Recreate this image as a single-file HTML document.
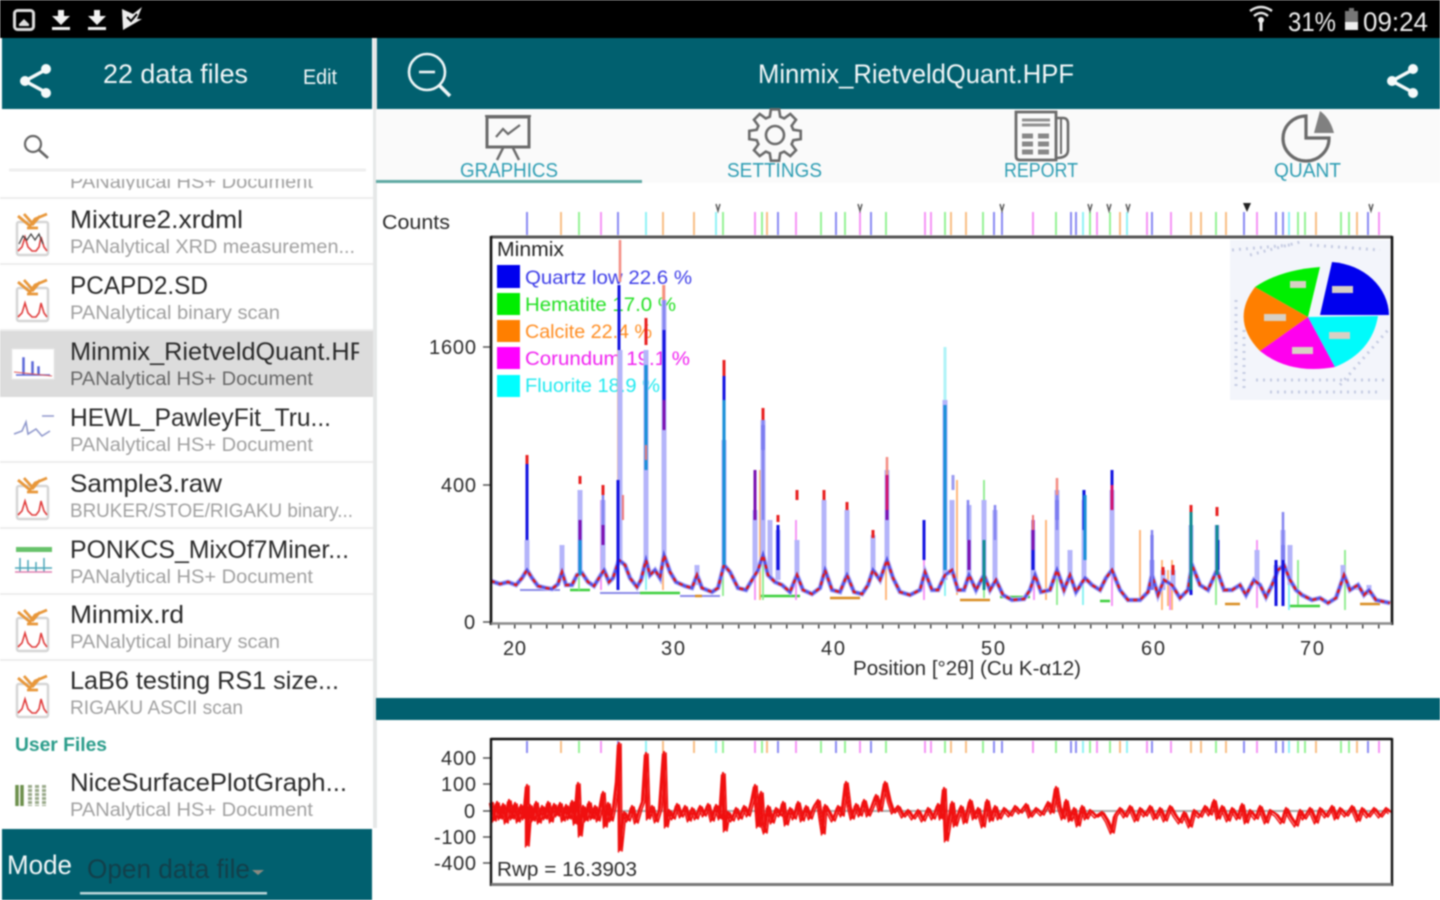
<!DOCTYPE html>
<html><head><meta charset="utf-8"><style>
html,body{margin:0;padding:0;width:1440px;height:900px;overflow:hidden;background:#fff}
svg{display:block;filter:blur(.75px)}
text{font-family:"Liberation Sans",sans-serif}
.t{font-size:25px;fill:#2a2a2a}
.s{font-size:19px;fill:#a0a0a0}
.w{fill:#f2f7f8}
.a{font-size:20px;fill:#2a2a2a}
.tab{font-size:20px;fill:#2d9db3}
.sep{stroke:#eeeeee;stroke-width:2}
</style></head><body>
<svg width="1440" height="900" viewBox="0 0 1440 900" xmlns="http://www.w3.org/2000/svg">
<defs>
<g id="fi">
<rect x="17" y="222" width="31" height="33" rx="2" fill="#fff" stroke="#d5d5d5" stroke-width="2.5"/>
<path d="M18 216 L30 226 L35 219 L47 214 M24 214 L33 224 L40 216 M27 228 H38" fill="none" stroke="#e8973a" stroke-width="2.8"/>
<path d="M18 251 L22 247 L25 237 L28 247 L32 251 L36 251 L39 247 L41 237 L44 247 L47 251" fill="none" stroke="#e03b3b" stroke-width="1.6"/>
</g>
<g id="sh" fill="none" stroke="#f5fafa"><path d="M27 -12 L5 0 L27 12" stroke-width="3.5"/><circle cx="5" cy="0" r="5" fill="#f5fafa" stroke="none"/><circle cx="26" cy="-12" r="5" fill="#f5fafa" stroke="none"/><circle cx="26" cy="12" r="5" fill="#f5fafa" stroke="none"/></g>
<g id="dl" fill="#f2f2f2"><path d="M6 0 H12 V6 H18 L9 15 L0 6 H6 Z"/><rect x="0" y="17" width="18" height="3"/></g>
<clipPath id="c1"><rect x="0" y="110" width="359" height="790"/></clipPath>
<clipPath id="c2"><rect x="0" y="179" width="373" height="11"/></clipPath>
<path id="hump" d="M491 581L500 584L508 582L516 585L522 578L527 570L532 578L538 586L546 588L552 589L558 584L562 572L566 585L572 585L577 575L582 573L588 582L594 586L599 578L604 570L609 582L613 578L619 560L625 565L630 578L637 587L641 580L646 560L650 575L655 570L660 578L664 555L670 572L676 582L685 586L692 588L697 575L702 588L712 592L718 588L724 565L730 572L738 588L746 590L752 580L758 570L763 555L768 575L775 582L782 585L790 592L797 575L803 590L812 594L820 588L825 570L832 590L840 592L847 575L854 592L862 594L868 585L873 570L880 580L887 560L893 578L900 592L910 595L920 590L925 572L932 590L938 590L945 575L952 570L958 590L964 590L969 575L976 590L984 575L990 590L996 580L1003 595L1012 600L1024 599L1030 590L1035 575L1041 592L1050 590L1057 570L1064 590L1070 575L1076 592L1085 578L1092 585L1100 590L1106 578L1112 570L1120 590L1128 600L1140 600L1148 592L1152 575L1158 595L1164 580L1172 585L1180 598L1188 590L1192 565L1200 585L1208 590L1217 570L1224 590L1232 590L1240 585L1246 595L1254 580L1260 585L1266 597L1272 585L1278 570L1284 565L1290 580L1296 590L1302 595L1312 600L1320 598L1328 603L1336 598L1344 575L1350 590L1358 585L1364 595L1369 590L1376 600L1390 603"/>
<path id="res" d="M491 801L494 820L497 802L500 818L503 804L506 822L509 800L512 818L515 803L518 821L521 805L524 818L527 785L527 845L530 805L533 820L536 802L539 822L542 806L545 818L548 802L551 821L554 804L557 815L560 803L563 820L566 805L569 818L572 801L575 823L578 783L580 835L583 806L586 820L589 802L592 818L595 806L598 820L601 803L603 792L605 826L608 803L611 820L614 806L617 780L619 743L620 850L624 812L628 820L632 806L636 822L640 808L643 800L646 753L648 818L652 806L656 821L660 808L664 752L666 826L669 810L673 818L677 804L681 816L685 806L689 820L692 808L696 818L700 806L704 815L708 804L712 820L716 805L720 818L723 773L725 830L728 812L732 820L736 808L740 818L744 806L748 815L752 800L755 785L758 826L761 792L763 825L765 832L768 806L772 822L776 808L780 815L783 802L786 824L790 808L794 818L798 802L802 820L806 806L810 818L814 806L818 800L821 820L823 833L825 805L829 812L833 820L838 806L842 815L846 782L849 806L852 818L856 804L860 815L864 800L868 815L872 806L876 795L880 810L885 782L889 800L893 812L898 806L903 816L908 810L913 818L918 810L923 820L928 808L933 818L938 804L941 818L944 788L946 840L949 822L952 802L955 825L958 815L961 806L965 822L970 800L974 818L978 808L983 826L987 800L991 820L995 806L999 818L1004 808L1010 815L1015 806L1020 812L1026 804L1030 816L1036 808L1042 814L1048 802L1052 812L1056 787L1059 806L1063 818L1066 800L1070 820L1074 808L1078 825L1082 806L1086 818L1090 810L1096 816L1102 812L1107 820L1112 832L1115 815L1120 808L1125 816L1130 806L1136 820L1140 808L1145 815L1150 806L1155 818L1160 808L1165 820L1170 806L1175 815L1180 822L1184 812L1190 826L1194 810L1200 816L1205 806L1210 814L1214 800L1218 818L1222 806L1228 820L1232 808L1238 818L1242 804L1246 822L1250 810L1256 818L1260 806L1266 822L1270 810L1276 814L1282 822L1286 808L1290 816L1296 825L1300 810L1304 818L1310 808L1316 822L1320 808L1326 816L1332 806L1336 818L1340 808L1346 815L1352 806L1358 820L1362 808L1368 816L1374 808L1380 816L1386 808L1390 812"/>
</defs>

<rect width="1440" height="900" fill="#fff"/>
<rect width="1440" height="38" fill="#000"/>
<rect x="373" y="38" width="4" height="790" fill="#e6e8e8"/>
<rect x="2" y="38" width="370" height="71" fill="#01606f"/>
<rect x="377" y="38" width="1063" height="71" fill="#01606f"/>
<rect x="376" y="110" width="1064" height="73" fill="#fafafa"/>

<!-- status bar -->
<rect x="14.5" y="10.5" width="19" height="19" rx="3" fill="none" stroke="#ddd" stroke-width="3"/>
<path d="M19 24 L24 19 L29 24 V26 H19 Z" fill="#ddd"/>
<use href="#dl" x="52" y="10"/><use href="#dl" x="88" y="10"/>
<path d="M122 9 L133 14 L142 7 L137 19 L142 19 L123 30 Z" fill="#eee"/>
<path d="M127 17 L131 21 L137 14" fill="none" stroke="#000" stroke-width="2"/>
<path d="M1250 11 Q1261 3 1272 11 M1254 16 Q1261 10 1268 16" fill="none" stroke="#e8e8e8" stroke-width="2.5"/>
<circle cx="1261" cy="20" r="3" fill="#eee"/><path d="M1261 20 V31" stroke="#eee" stroke-width="3"/>
<text x="1288" y="31" font-size="27" fill="#eee" textLength="48" lengthAdjust="spacingAndGlyphs">31%</text>
<rect x="1345" y="11" width="13" height="19" fill="#777"/><rect x="1345" y="22" width="13" height="8" fill="#eee"/><rect x="1349" y="8" width="5" height="3" fill="#777"/>
<text x="1363" y="31" font-size="27" fill="#eee" textLength="65" lengthAdjust="spacingAndGlyphs">09:24</text>

<!-- left header -->
<use href="#sh" x="20" y="81"/>
<text x="103" y="83" font-size="27" class="w" textLength="145" lengthAdjust="spacingAndGlyphs">22 data files</text>
<text x="303" y="84" font-size="21" class="w" textLength="34" lengthAdjust="spacingAndGlyphs">Edit</text>

<!-- search -->
<circle cx="33" cy="144" r="8" fill="none" stroke="#666" stroke-width="2.2"/>
<path d="M39 150 L48 158" stroke="#666" stroke-width="2.6"/>
<path d="M9 170 H366" stroke="#eeeeee" stroke-width="3"/>

<!-- list -->
<rect x="0" y="331" width="373" height="66" fill="#dcdcdc"/>
<g clip-path="url(#c2)"><text x="70" y="188" class="s" textLength="243" lengthAdjust="spacingAndGlyphs">PANalytical HS+ Document</text></g>
<path class="sep" d="M0 198 H373 M0 264 H373 M0 330 H373 M0 462 H373 M0 528 H373 M0 594 H373 M0 660 H373"/>

<use href="#fi"/>
<use href="#fi" y="66"/>
<use href="#fi" y="264"/><use href="#fi" y="396"/><use href="#fi" y="462"/>
<path d="M19 244 L23 236 L27 240 L31 234 L35 240 L39 234 L43 244" fill="none" stroke="#444" stroke-width="1.3"/>
<!-- hs icons -->
<rect x="12" y="349" width="42" height="30" fill="#fff" stroke="#ebebeb"/>
<path d="M16 375 H23 V358 H24 V375 H32 V362 H33 V375 H38 V367 H39 V375 H50" fill="none" stroke="#5a66d8" stroke-width="1.5"/>
<path d="M14 372 L52 376" stroke="#d55" stroke-width="1"/>
<path d="M14 434 L22 431 L26 422 L28 434 L36 429 L42 436 L50 431 M42 416 H54" fill="none" stroke="#8f98cc" stroke-width="1.6"/>
<rect x="16" y="547" width="36" height="5" fill="#67c26a"/>
<path d="M15 568 H52 M20 558 V572 M28 560 V572 M36 562 V572 M44 558 V572" fill="none" stroke="#4aa6b8" stroke-width="1.5"/>
<path d="M15 572 H52" stroke="#e07fb0" stroke-width="1.5"/>
<path d="M17 785 V806 M22 785 V806" stroke="#6b8f4b" stroke-width="3.5"/>
<path d="M30 785 V806 M37 785 V806 M44 785 V806" stroke="#9bab8c" stroke-width="4" stroke-dasharray="3 1"/>

<g clip-path="url(#c1)">
<text x="70" y="228" class="t" textLength="173" lengthAdjust="spacingAndGlyphs">Mixture2.xrdml</text>
<text x="70" y="253" class="s" textLength="285" lengthAdjust="spacingAndGlyphs">PANalytical XRD measuremen...</text>
<text x="70" y="294" class="t" textLength="138" lengthAdjust="spacingAndGlyphs">PCAPD2.SD</text>
<text x="70" y="319" class="s" textLength="210" lengthAdjust="spacingAndGlyphs">PANalytical binary scan</text>
<text x="70" y="360" class="t" textLength="312" lengthAdjust="spacingAndGlyphs">Minmix_RietveldQuant.HPF</text>
<text x="70" y="385" class="s" style="fill:#666" textLength="243" lengthAdjust="spacingAndGlyphs">PANalytical HS+ Document</text>
<text x="70" y="426" class="t" textLength="261" lengthAdjust="spacingAndGlyphs">HEWL_PawleyFit_Tru...</text>
<text x="70" y="451" class="s" textLength="243" lengthAdjust="spacingAndGlyphs">PANalytical HS+ Document</text>
<text x="70" y="492" class="t" textLength="152" lengthAdjust="spacingAndGlyphs">Sample3.raw</text>
<text x="70" y="517" class="s" textLength="283" lengthAdjust="spacingAndGlyphs">BRUKER/STOE/RIGAKU binary...</text>
<text x="70" y="558" class="t" textLength="279" lengthAdjust="spacingAndGlyphs">PONKCS_MixOf7Miner...</text>
<text x="70" y="583" class="s" textLength="243" lengthAdjust="spacingAndGlyphs">PANalytical HS+ Document</text>
<text x="70" y="623" class="t" textLength="114" lengthAdjust="spacingAndGlyphs">Minmix.rd</text>
<text x="70" y="648" class="s" textLength="210" lengthAdjust="spacingAndGlyphs">PANalytical binary scan</text>
<text x="70" y="689" class="t" textLength="269" lengthAdjust="spacingAndGlyphs">LaB6 testing RS1 size...</text>
<text x="70" y="714" class="s" textLength="173" lengthAdjust="spacingAndGlyphs">RIGAKU ASCII scan</text>
<text x="70" y="791" class="t" textLength="277" lengthAdjust="spacingAndGlyphs">NiceSurfacePlotGraph...</text>
<text x="70" y="816" class="s" textLength="243" lengthAdjust="spacingAndGlyphs">PANalytical HS+ Document</text>
</g>
<text x="15" y="751" font-size="19" font-weight="bold" fill="#2a9c8a" textLength="92" lengthAdjust="spacingAndGlyphs">User Files</text>

<!-- left footer -->
<rect x="2" y="829" width="370" height="71" fill="#01606f"/>
<text x="7" y="874" font-size="27" class="w" textLength="65" lengthAdjust="spacingAndGlyphs">Mode</text>
<text x="87" y="878" font-size="27" fill="#123f4a" textLength="163" lengthAdjust="spacingAndGlyphs">Open data file</text>
<path d="M252 870 H264 L258 875 Z" fill="#8a8a80"/>
<rect x="80" y="892" width="187" height="2.5" fill="#bcd6da"/>

<!-- right header -->
<circle cx="427" cy="72" r="18" fill="none" stroke="#eef6f7" stroke-width="2.6"/>
<path d="M419 72 H435" stroke="#eef6f7" stroke-width="2.6"/>
<path d="M439 85 L450 96" stroke="#eef6f7" stroke-width="3.5"/>
<text x="758" y="83" font-size="27" class="w" textLength="316" lengthAdjust="spacingAndGlyphs">Minmix_RietveldQuant.HPF</text>
<use href="#sh" x="1387" y="81"/>

<!-- tabs -->
<g fill="none" stroke="#6a6a6a">
<rect x="487" y="117" width="42" height="30" stroke-width="3"/>
<path d="M485 116 H531" stroke-width="2"/>
<path d="M496 137 L503 129 L508 134 L520 125" stroke-width="2.2"/>
<path d="M503 148 L497 160 M513 148 L519 160" stroke-width="2.5"/>
<path transform="translate(775 135)" stroke-width="2.6" d="M18.3 -5.2L25.7 -4.1L25.7 4.1L18.3 5.2L16.6 9.2L21 15.3L15.3 21L9.2 16.6L5.2 18.3L4.1 25.7L-4.1 25.7L-5.2 18.3L-9.2 16.6L-15.3 21L-21 15.3L-16.6 9.2L-18.3 5.2L-25.7 4.1L-25.7 -4.1L-18.3 -5.2L-16.6 -9.2L-21 -15.3L-15.3 -21L-9.2 -16.6L-5.2 -18.3L-4.1 -25.7L4.1 -25.7L5.2 -18.3L9.2 -16.6L15.3 -21L21 -15.3L16.6 -9.2Z"/>
<circle cx="775" cy="135" r="9" stroke-width="2.6"/>
<path d="M1016 112 H1056 V160 H1020 Q1016 160 1016 156 Z" stroke-width="2.8"/>
<path d="M1056 118 H1063 Q1068 118 1068 124 V150 Q1068 158 1056 158" stroke-width="2.6"/>
<path d="M1061 118 V154" stroke-width="2"/>
<path d="M1022 120 H1050 M1022 125 H1050" stroke="#909090" stroke-width="3"/>
<path d="M1022 136 H1033 M1038 136 H1049 M1022 144 H1033 M1038 144 H1049 M1022 152 H1033 M1038 152 H1049" stroke="#888" stroke-width="5"/>
<path d="M1306 116 A23 22.5 0 1 0 1329 138 L1306 138 Z" stroke-width="3.2"/>
</g>
<path d="M1314 133 L1320 111 Q1330 118 1334 133 Z" fill="#808080"/>
<text x="460" y="177" class="tab" textLength="98" lengthAdjust="spacingAndGlyphs">GRAPHICS</text>
<text x="727" y="177" class="tab" textLength="95" lengthAdjust="spacingAndGlyphs">SETTINGS</text>
<text x="1004" y="177" class="tab" textLength="74" lengthAdjust="spacingAndGlyphs">REPORT</text>
<text x="1274" y="177" class="tab" textLength="67" lengthAdjust="spacingAndGlyphs">QUANT</text>
<rect x="376" y="180" width="266" height="3" fill="#5fa9a3"/>

<!-- main chart labels -->
<text x="382" y="229" class="a" textLength="68" lengthAdjust="spacingAndGlyphs">Counts</text>
<text x="429" y="354" class="a" textLength="47">1600</text>
<text x="441" y="492" class="a" textLength="35">400</text>
<text x="464" y="629" class="a">0</text>
<path d="M483 347 H491 M483 485 H491 M483 622 H491" stroke="#555" stroke-width="1.6"/>
<text x="503" y="655" class="a" textLength="23">20</text>
<text x="661" y="655" class="a" textLength="24">30</text>
<text x="821" y="655" class="a" textLength="24">40</text>
<text x="981" y="655" class="a" textLength="24">50</text>
<text x="1141" y="655" class="a" textLength="24">60</text>
<text x="1300" y="655" class="a" textLength="24">70</text>
<text x="853" y="675" class="a" textLength="228" lengthAdjust="spacingAndGlyphs">Position [°2θ] (Cu K-α12)</text>
<path d="M498 626.5 H1392" stroke="#444" stroke-width="4" stroke-dasharray="1.5 14.5"/>

<!-- hkl ticks -->
<g stroke-width="2" opacity=".55">
<path stroke="#2a2ae8" d="M527 212V235M618 212V235M778 212V235M836 212V235M871 212V235M994 212V235M1002 212V235M1071 212V235M1076 212V235M1152 212V235M1244 212V235M1276 212V235M1283 212V235M1368 212V235"/>
<path stroke="#f58a1e" d="M561 212V235M663 212V235M694 212V235M767 212V235M951 212V235M966 212V235M1120 212V235M1191 212V235M1201 212V235M1226 212V235M1316 212V235M1357 212V235"/>
<path stroke="#3fe83f" d="M579 212V235M723 212V235M762 212V235M821 212V235M845 212V235M886 212V235M945 212V235M983 212V235M1056 212V235M1090 212V235M1110 212V235M1216 212V235M1298 212V235M1305 212V235M1341 212V235M1349 212V235"/>
<path stroke="#f03cf0" d="M601 212V235M755 212V235M796 212V235M860 212V235M925 212V235M931 212V235M1033 212V235M1097 212V235M1147 212V235M1171 212V235M1257 212V235M1379 212V235"/>
<path stroke="#33eaf0" d="M646 212V235M716 212V235M1083 212V235M1127 212V235M1289 212V235"/>
</g>
<path d="M716 204 L718 211 L720 204 M858 204 L860 211 L862 204 M1000 204 L1002 211 L1004 204 M1088 204 L1090 211 L1092 204 M1107 204 L1109 211 L1111 204 M1126 204 L1128 211 L1130 204 M1369 204 L1371 211 L1373 204" fill="none" stroke="#555" stroke-width="1.4"/>
<path d="M1243 203 H1251 L1247 212 Z" fill="#222"/>

<!-- legend under peaks -->
<text x="497" y="256" font-size="20" fill="#222" textLength="67" lengthAdjust="spacingAndGlyphs">Minmix</text>
<rect x="497" y="265" width="23" height="23" fill="#0000ee"/>
<rect x="497" y="293" width="23" height="22" fill="#00ee00"/>
<rect x="497" y="320" width="23" height="22" fill="#ff7f00"/>
<rect x="497" y="347" width="23" height="22" fill="#ff00ff"/>
<rect x="497" y="375" width="23" height="22" fill="#00ffff"/>
<g font-size="19.5">
<text x="525" y="284" fill="#3c3ce8" textLength="167" lengthAdjust="spacingAndGlyphs">Quartz low 22.6 %</text>
<text x="525" y="311" fill="#22e022" textLength="151" lengthAdjust="spacingAndGlyphs">Hematite 17.0 %</text>
<text x="525" y="338" fill="#ff8c20" textLength="127" lengthAdjust="spacingAndGlyphs">Calcite 22.4 %</text>
<text x="525" y="365" fill="#f020f0" textLength="165" lengthAdjust="spacingAndGlyphs">Corundum 19.1 %</text>
<text x="525" y="392" fill="#22eaf0" textLength="135" lengthAdjust="spacingAndGlyphs">Fluorite 18.9 %</text>
</g>

<!-- pie -->
<rect x="1230" y="240" width="160" height="160" fill="#f3f5fb"/>
<path d="M1232 250 L1290 245 M1250 255 L1300 242 M1310 245 L1380 250 M1236 300 V390 M1244 330 V392 M1256 380 H1385 M1270 392 H1380 M1340 385 L1388 330" stroke="#c5cbe2" stroke-width="3" stroke-dasharray="2 5" fill="none"/>
<path d="M1320 315 L1332 262 A62 54 0 0 1 1389 315 Z" fill="#0000ee"/>
<path d="M1308 317 L1255 287 Q1280 270 1320 267 Z" fill="#00f000"/>
<path d="M1308 317 L1255 287 Q1230 320 1260 351 Z" fill="#ff7f00"/>
<path d="M1308 317 L1260 351 Q1290 375 1335 367 Z" fill="#ff00ee"/>
<path d="M1308 317 L1378 316 Q1372 352 1335 367 Z" fill="#00fbfb"/>
<g fill="#d8d0c4"><rect x="1332" y="286" width="21" height="7"/><rect x="1290" y="281" width="16" height="7"/><rect x="1264" y="314" width="22" height="7"/><rect x="1329" y="332" width="21" height="7"/><rect x="1292" y="347" width="21" height="7"/></g>

<!-- peaks -->
<g fill="none" stroke-linecap="butt">
<path d="M520 590H560M600 593H660M680 596H720" stroke="#8a8ae8" stroke-width="2"/>
<path d="M570 590H590M640 593H680M760 596H800M1000 597H1030M1100 601H1110M1290 606H1320" stroke="#3ccf3c" stroke-width="2.5"/>
<path d="M695 596H702M830 598H860M960 600H990M1225 604H1240M1360 604H1380" stroke="#d98c20" stroke-width="2.5"/>
<g stroke-width="1.8">
<path stroke="#ffb070" d="M663 285V590M618 350V590M760 470V600M886 500V600M957 480V595M1046 520V600M1140 530V600M1162 560V610M1172 560V610M1168 570V606"/>
<path stroke="#8aec8a" d="M579 510V590M723 440V596M763 420V600M984 480V598M1057 490V605M1216 540V605M1298 560V605M1345 550V610"/>
<path stroke="#f48af4" d="M601 500V590M755 520V600M796 520V600M924 540V600M1034 520V600M1112 500V606M1257 540V608M1170 585V610"/>
<path stroke="#7ff2f2" d="M646 440V590M945 350V596M1083 490V605M1289 570V610"/>
</g>
<path stroke="#b4b4fa" stroke-width="5" d="M527 540V575M562 545V580M580 490V575M603 500V575M620 350V565M646 350V565M664 300V560M697 565V585M724 440V570M763 420V560M755 510V575M770 520V578M778 530V580M797 540V580M824 500V575M847 510V580M873 535V575M887 470V565M945 400V580M952 500V575M969 505V580M984 500V580M995 510V585M1033 530V580M1057 490V575M1070 550V580M1084 500V583M1112 490V575M1152 560V580M1163 570V590M1173 570V590M1191 525V570M1217 525V575M1257 550V585M1276 565V575M1283 530V570M1290 545V585M1343 565V580M1358 585V590M1369 585V595"/>
<use href="#hump" stroke="#b4b4fa" stroke-width="5"/>
<use href="#hump" stroke="#5252e4" stroke-width="2.8"/>
<use href="#hump" stroke="#e01818" stroke-width="2.4" stroke-dasharray="4 4"/>
<path stroke="#1212e0" stroke-width="3" d="M527 462V540M619 285V350M618 480V590M664 330V400M763 425V450M724 375V400M778 525V570M924 520V560M1057 500V520M1084 490V530M1112 470V510M1152 535V590M1033 530V570M1191 560V595M1218 540V570M1276 560V606M1283 545V606"/>
<path stroke="#1a8fd8" stroke-width="3.2" d="M646 365V470M724 400V565M945 405V570M580 540V575M1085 495V560"/>
<path stroke="#0f8a90" stroke-width="3" d="M1191 505V590M1217 525V575M984 540V590"/>
<path stroke="#7a10b0" stroke-width="3" d="M755 470V520M664 400V430M580 520V540M603 525V545M887 480V520M1033 520V550M969 540V570"/>
<path stroke="#d01070" stroke-width="3" d="M887 475V510M1112 485V510"/>
<path stroke="#8484f0" stroke-width="2.5" d="M664 300V330M763 420V520M603 495V525M1057 490V530M1283 512V560M968 500V540M995 505V540M1152 530V590"/>
<path stroke="#f48a80" stroke-width="2.5" d="M620 240V282M664 285V300M887 457V475M1057 478V495"/>
<path stroke="#e82020" stroke-width="3" d="M527 455V464M580 476V484M603 485V495M646 318V345M724 360V376M763 408V420M797 490V500M778 515V522M824 490V500M847 502V510M873 530V538M1191 505V512M1217 507V516M1163 567V575M1173 565V575"/>
<path stroke="#aef3f7" stroke-width="3" d="M945 347V400"/>
<path stroke="#9a9af0" stroke-width="3" d="M953 475V490"/>
<path stroke="#f07878" stroke-width="2" d="M646 445V460M623 495V520M1033 515V530"/>
</g>

<!-- main box -->
<path d="M491 237 H1392" stroke="#555" stroke-width="3"/>
<path d="M491 236 V625 M1392 236 V625" stroke="#111" stroke-width="2.6"/>
<path d="M491 623.5 H1392" stroke="#8a8a8a" stroke-width="2.5"/>

<!-- teal band -->
<rect x="376" y="698" width="1064" height="22" fill="#01606f"/>

<!-- residual -->
<text x="441" y="765" class="a" textLength="35">400</text>
<text x="441" y="791" class="a" textLength="35">100</text>
<text x="464" y="818" class="a">0</text>
<text x="434" y="844" class="a" textLength="42">-100</text>
<text x="434" y="870" class="a" textLength="42">-400</text>
<path d="M483 758H491M483 784H491M483 811H491M483 837H491M483 863H491" stroke="#555" stroke-width="1.6"/>
<path d="M491 811 H1390" stroke="#aaa" stroke-width="2"/>
<g stroke-width="2" opacity=".55">
<path stroke="#2a2ae8" d="M527 741V753M618 741V753M778 741V753M836 741V753M871 741V753M994 741V753M1002 741V753M1071 741V753M1076 741V753M1152 741V753M1244 741V753M1276 741V753M1283 741V753M1368 741V753"/>
<path stroke="#f58a1e" d="M561 741V753M663 741V753M694 741V753M767 741V753M951 741V753M966 741V753M1120 741V753M1191 741V753M1201 741V753M1226 741V753M1316 741V753M1357 741V753"/>
<path stroke="#3fe83f" d="M579 741V753M723 741V753M762 741V753M821 741V753M845 741V753M886 741V753M945 741V753M983 741V753M1056 741V753M1090 741V753M1110 741V753M1216 741V753M1298 741V753M1305 741V753M1341 741V753M1349 741V753"/>
<path stroke="#f03cf0" d="M601 741V753M755 741V753M796 741V753M860 741V753M925 741V753M931 741V753M1033 741V753M1097 741V753M1147 741V753M1171 741V753M1257 741V753M1379 741V753"/>
<path stroke="#33eaf0" d="M646 741V753M716 741V753M1083 741V753M1127 741V753M1289 741V753"/>
</g>
<g fill="none" stroke="#f01010" stroke-linejoin="round">
<use href="#res" stroke-width="2.2"/>
<use href="#res" stroke-width="1.6" transform="translate(2 1)"/>
<use href="#res" stroke-width="1.4" transform="translate(-1.5 2)"/>
</g>
<text x="497" y="876" class="a" textLength="140" lengthAdjust="spacingAndGlyphs">Rwp = 16.3903</text>
<path d="M491 739 H1392" stroke="#111" stroke-width="2.4"/>
<path d="M491 738 V886 M1392 738 V886" stroke="#111" stroke-width="2.4"/>
<path d="M491 884.5 H1392" stroke="#777" stroke-width="3"/>
</svg>
</body></html>
